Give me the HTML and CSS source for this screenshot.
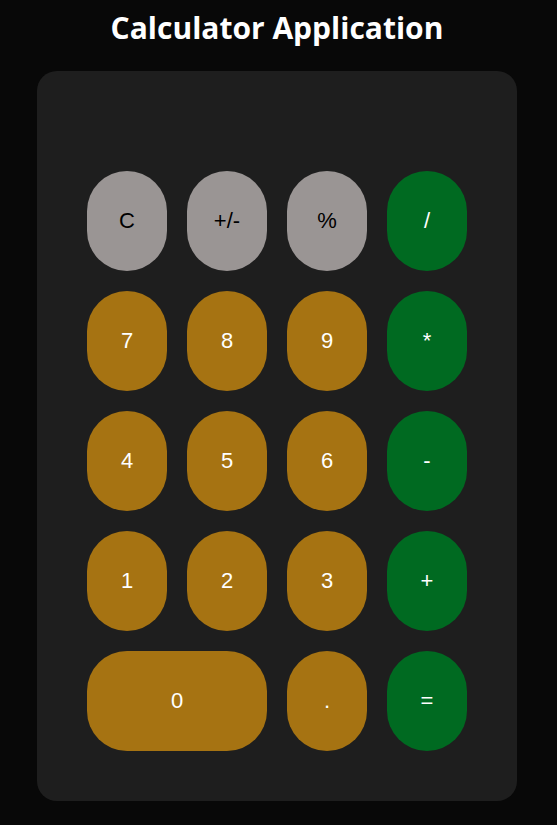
FILE: index.html
```html
<!DOCTYPE html>
<html>
<head>
<meta charset="utf-8">
<link rel="stylesheet" href="styles.css">
</head>
<body>
<h1 class="title">Calculator Application</h1>
<div class="calc">
  <div class="display"></div>
  <div class="keys">
    <button class="key gray">C</button>
    <button class="key gray">+/-</button>
    <button class="key gray">%</button>
    <button class="key op">/</button>
    <button class="key num">7</button>
    <button class="key num">8</button>
    <button class="key num">9</button>
    <button class="key op">*</button>
    <button class="key num">4</button>
    <button class="key num">5</button>
    <button class="key num">6</button>
    <button class="key op">-</button>
    <button class="key num">1</button>
    <button class="key num">2</button>
    <button class="key num">3</button>
    <button class="key op">+</button>
    <button class="key num zero">0</button>
    <button class="key num">.</button>
    <button class="key op">=</button>
  </div>
</div>
</body>
</html>
```
FILE: styles.css
```css
html, body {
  margin: 0;
  padding: 0;
  background: #080808;
}
body {
  display: flex;
  flex-direction: column;
  align-items: center;
  padding-right: 3px;
}
.title {
  margin: 8px 0 23px;
  font-family: "Open Sans", "Noto Sans", sans-serif;
  font-weight: 700;
  font-size: 30px;
  line-height: 40px;
  color: #ffffff;
}
.calc {
  width: 480px;
  height: 730px;
  box-sizing: border-box;
  background: #1e1e1e;
  border-radius: 20px;
  padding: 0 50px 50px;
  display: flex;
  flex-direction: column;
}
.display {
  height: 100px;
}
.keys {
  display: grid;
  grid-template-columns: repeat(4, 80px);
  grid-auto-rows: 100px;
  gap: 20px;
}
.key {
  border: none;
  border-radius: 40px;
  font-family: "Liberation Sans", Arial, sans-serif;
  font-size: 22px;
  padding: 0;
  color: #ffffff;
}
.gray {
  background: #9a9594;
  color: #000000;
}
.num {
  background: #a67312;
}
.op {
  background: #006a21;
}
.zero {
  grid-column: span 2;
}
```
